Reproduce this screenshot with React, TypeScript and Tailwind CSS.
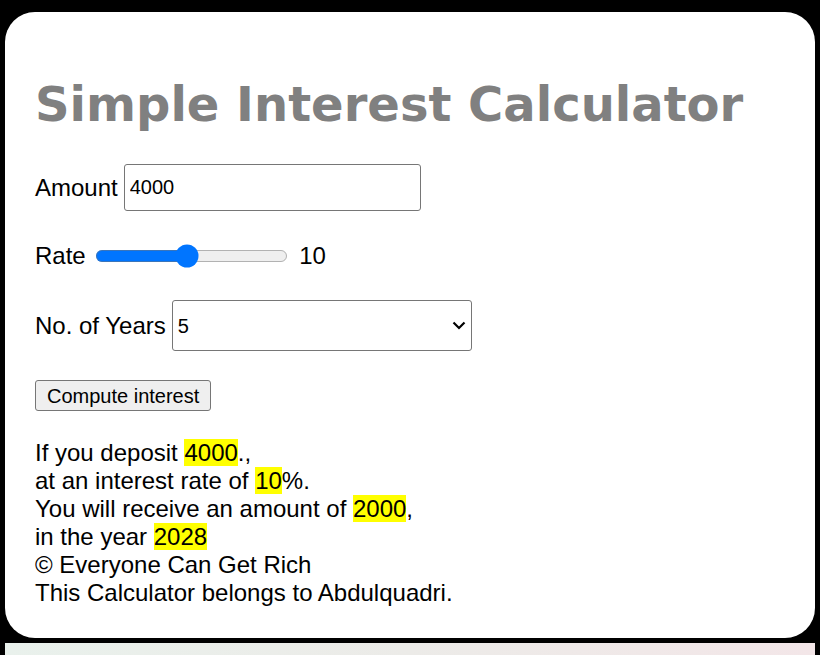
import { useState } from 'react';

export default function App() {
  const [amount, setAmount] = useState('4000');
  const [rate, setRate] = useState(10);
  const [years, setYears] = useState('5');

  return (
    <div className="min-h-[655px] bg-black pt-3 px-[5px] font-['Liberation_Sans',Arial,sans-serif] text-black">
      <div className="h-[626px] rounded-[30px] bg-white px-[30px]">
        <h1 className="pt-[63px] text-[48px] leading-[58px] font-bold text-[#808080] font-['DejaVu_Sans',Verdana,sans-serif]">
          Simple Interest Calculator
        </h1>

        <div className="mt-[31px] flex h-[47px] items-center text-[24px] leading-[28px]">
          <label htmlFor="amount">Amount</label>
          <input
            id="amount"
            type="number"
            value={amount}
            onChange={(e) => setAmount(e.target.value)}
            className="ml-[6px] h-[47px] w-[297px] rounded-[3px] border border-[#767676] px-[5px] text-[20px] [appearance:textfield] [&::-webkit-inner-spin-button]:appearance-none"
          />
        </div>

        <div className="mt-[32px] flex h-[26px] items-center text-[24px] leading-[28px]">
          <span>Rate</span>
          <input
            type="range"
            min={1}
            max={20}
            value={rate}
            onChange={(e) => setRate(Number(e.target.value))}
            className="ml-[6px] [zoom:1.5]"
          />
          <span className="ml-[11px]">{rate}</span>
        </div>

        <div className="mt-[31px] flex h-[51px] items-center text-[24px] leading-[28px]">
          <label htmlFor="years">No. of Years</label>
          <div className="relative ml-[6px]">
            <select
              id="years"
              value={years}
              onChange={(e) => setYears(e.target.value)}
              className="h-[51px] w-[300px] appearance-none rounded-[3px] border border-[#767676] bg-white pl-[5px] text-[20px]"
            >
              {[1, 2, 3, 4, 5, 6, 7, 8, 9, 10].map((y) => (
                <option key={y} value={y}>
                  {y}
                </option>
              ))}
            </select>
            <svg
              className="pointer-events-none absolute right-[5px] top-[19px]"
              width="16"
              height="12"
              viewBox="0 0 16 12"
              fill="none"
            >
              <path d="M2.5 3.5 8 9l5.5-5.5" stroke="#000" strokeWidth="2.2" />
            </svg>
          </div>
        </div>

        <div className="mt-[29px]">
          <button className="h-[31px] rounded-[3px] border border-[#767676] bg-[#efefef] px-[11px] text-[20px] leading-none">
            Compute interest
          </button>
        </div>

        <div className="mt-[28px] text-[24px] leading-[28px]">
          If you deposit <span className="bg-[#ffff00]">{amount}</span>.,
          <br />
          at an interest rate of <span className="bg-[#ffff00]">{rate}</span>%.
          <br />
          You will receive an amount of <span className="bg-[#ffff00]">2000</span>,
          <br />
          in the year <span className="bg-[#ffff00]">2028</span>
          <br />
          © Everyone Can Get Rich
          <br />
          This Calculator belongs to Abdulquadri.
        </div>
      </div>
      <div className="mt-[5px] h-[12px] bg-gradient-to-r from-[#e9f1ec] via-[#ecebe8] to-[#f3e6e8]" />
    </div>
  );
}
